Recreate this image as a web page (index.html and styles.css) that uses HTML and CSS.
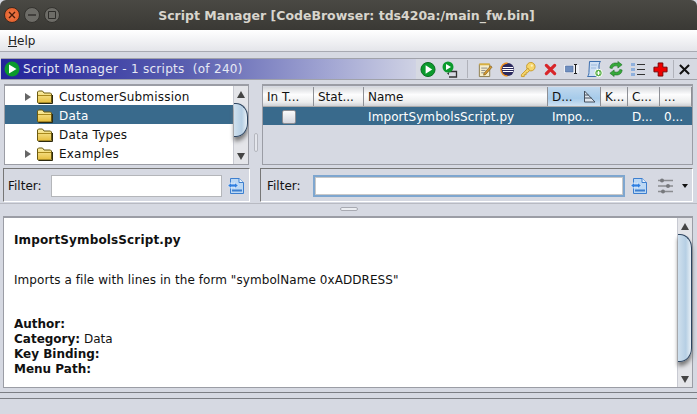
FILE: index.html

```html
<!DOCTYPE html>
<html lang="en">
<head>
  <meta charset="UTF-8" />
  <title>Script Manager</title>
  <link rel="stylesheet" href="styles.css">
</head>
<body>
  <svg class="defs" width="0" height="0">
    <defs>
      <linearGradient id="folderFill" x1="0" y1="0" x2="0" y2="1">
        <stop offset="0" stop-color="#fbf0a8"/>
        <stop offset="1" stop-color="#e6bc3a"/>
      </linearGradient>
    </defs>
    <symbol id="folder" viewBox="0 0 16 14">
      <path d="M.5 12.5V2L1.5 1H5.5L7 3H13.5L14.5 4V12.5L13.5 13H1.5Z" fill="url(#folderFill)" stroke="#6b5a10"/>
      <path d="M1 5.5H14" stroke="#a8881c"/>
      <path d="M1.5 13.5H15.5V5" fill="none" stroke="#2d2a10"/>
    </symbol>
    <symbol id="apply" viewBox="0 0 18 18">
      <path d="M3.5 1.5H12L16.5 5.5V16.5H3.5Z" fill="#bcd8f4" stroke="#3d7fcf"/>
      <path d="M12 1.5V5.5H16.5" fill="#e8f2fc" stroke="#3d7fcf"/>
      <path d="M5 13.5H15" stroke="#3d7fcf" stroke-width="2"/>
      <path d="M1 8.5L4 5.5V7H8V5.5L11 8.5L8 11.5V10H4V11.5Z" fill="#2f7fe0" stroke="#e8f2fc" stroke-width=".7"/>
    </symbol>
  </svg>

  <div class="window">
    <header class="titlebar">
      <div class="wm-buttons">
        <span class="wm-btn wm-close">
          <svg width="8" height="8" viewBox="0 0 8 8"><path d="M1 1L7 7M7 1L1 7" stroke="#4a1a08" stroke-width="1.4"/></svg>
        </span>
        <span class="wm-btn">
          <svg width="8" height="8" viewBox="0 0 8 8"><path d="M0 4H8" stroke="#2e2d2a" stroke-width="1.4"/></svg>
        </span>
        <span class="wm-btn">
          <svg width="8" height="8" viewBox="0 0 8 8"><path d="M.5.5H7.5V7.5H.5Z" fill="none" stroke="#2e2d2a"/></svg>
        </span>
      </div>
      <div class="window-title">Script Manager [CodeBrowser: tds420a:/main_fw.bin]</div>
    </header>

    <nav class="menubar"><span><u>H</u>elp</span></nav>

    <div class="provider-head">
      <div class="provider-title">
        <svg width="16" height="16" viewBox="0 0 16 16"><circle cx="8" cy="8" r="7.5" fill="#0b9a2c"/><path d="M5 3.5L12.5 8L5 12.5Z" fill="#fff"/></svg>
        <span>Script Manager - 1 scripts&nbsp; (of 240)</span>
      </div>
      <div class="toolbar">
        <svg class="tool" width="16" height="17" viewBox="0 0 17 17"><circle cx="8.5" cy="8.5" r="7.5" fill="#0b9a2c" stroke="#066b1d"/><path d="M6 4L13 8.5L6 13Z" fill="#fff"/></svg>
        <svg class="tool gap6" width="16" height="17" viewBox="0 0 16 17"><path d="M7 10.5H14.5V16H7" fill="none" stroke="#333" stroke-width="1.3"/><path d="M7 14L5 12.5L7 11" fill="#333"/><circle cx="6" cy="6" r="5.5" fill="#0b9a2c"/><path d="M4 3L9 6L4 9Z" fill="#fff"/></svg>
        <span class="tool-sep gap9"></span>
        <svg class="tool gap9" width="16" height="17" viewBox="0 0 17 17"><path d="M2.5 3H13.5V16H2.5Z" fill="#f6eecb" stroke="#8a7a4a"/><path d="M2.5 2H13.5V4H2.5Z" fill="#d8b040"/><path d="M4.5 7H11M4.5 9.5H9M4.5 12H8" stroke="#888"/><path d="M7.5 12.5L14.5 4.5L16 6L9 14L7 14.5Z" fill="#d89a30" stroke="#6b4c12" stroke-width=".6"/></svg>
        <svg class="tool gap7" width="15" height="15" viewBox="0 0 16 16"><circle cx="8" cy="8" r="7" fill="#2c2a5e"/><path d="M1 8A7 7 0 0 1 8 1" fill="none" stroke="#f09020" stroke-width="1.5"/><path d="M1 8A7 7 0 0 0 8 15" fill="none" stroke="#f09020" stroke-width="1.5"/><path d="M3 5.8H14M2.5 8H14.5M3 10.2H14" stroke="#fff" stroke-width="1.1"/></svg>
        <svg class="tool gap5" width="16" height="17" viewBox="0 0 17 17"><circle cx="11.5" cy="5.5" r="4.5" fill="#f6d66c" stroke="#c89a2a"/><circle cx="12.5" cy="4.5" r="1.2" fill="#fff3c0"/><path d="M8.5 7L1.5 14V16H4.5V14H6.5V12H8L10 9.5Z" fill="#f6d66c" stroke="#c89a2a"/></svg>
        <svg class="tool gap8" width="13" height="13" viewBox="0 0 14 14"><path d="M2.5 2.5L11.5 11.5M11.5 2.5L2.5 11.5" stroke="#d8262a" stroke-width="3.4" stroke-linecap="round"/></svg>
        <svg class="tool gap7" width="16" height="12" viewBox="0 0 16 12"><path d="M0 2H15V10H0Z" fill="#eef0f5"/><path d="M1.5 3H9V9H1.5Z" fill="#6f8fc0" stroke="#4a6a9c" stroke-width=".6"/><path d="M10 1.5H13M11.5 1.5V10.5M10 10.5H13" stroke="#222" fill="none"/></svg>
        <svg class="tool gap6" width="17" height="18" viewBox="0 0 17 18"><path d="M3.5 1.5H14.5C13 3 13 5 13 8V13L11 16.5H1.5C3 15 3 13 3 11Z" fill="#cfe0f4" stroke="#3d6fae"/><path d="M5 5H11M5 8H10" stroke="#9ab8dc"/><circle cx="12.5" cy="13" r="3.8" fill="#5bb04a" stroke="#fff"/><path d="M10.5 13H14.5M12.5 11V15" stroke="#fff" stroke-width="1.2"/></svg>
        <svg class="tool gap5" width="16" height="18" viewBox="0 0 17 18"><path d="M2 8C2 4 6 1.5 10.5 3V1L15 4.5L10.5 8V6C7.5 5 5 6 4.5 8.5Z" fill="#35a83a" stroke="#1c6b22" stroke-width=".6"/><path d="M15 10C15 14 11 16.5 6.5 15V17L2 13.5L6.5 10V12C9.5 13 12 12 12.5 9.5Z" fill="#35a83a" stroke="#1c6b22" stroke-width=".6"/></svg>
        <svg class="tool gap7" width="14" height="13" viewBox="0 0 14 13"><path d="M0 0H4V3H0ZM0 5H4V8H0ZM0 10H4V13H0Z" fill="#8fb0dc"/><path d="M6 1.5H14M6 6.5H14M6 11.5H14" stroke="#333"/></svg>
        <svg class="tool gap8" width="15" height="15" viewBox="0 0 16 16"><path d="M5.5 1H10.5V5.5H15V10.5H10.5V15H5.5V10.5H1V5.5H5.5Z" fill="#ee0000" stroke="#700"/></svg>
        <span class="tool-sep gap5"></span>
        <svg class="tool gap5" width="11" height="11" viewBox="0 0 12 12"><path d="M1 1L11 11M11 1L1 11" stroke="#111" stroke-width="2.2"/></svg>
      </div>
    </div>

    <div class="split-top">
      <section class="left-col">
        <div class="tree-box">
          <ul class="tree">
            <li class="tree-row"><span class="caret"></span><svg class="folder"><use href="#folder"/></svg>CustomerSubmission</li>
            <li class="tree-row selected"><span class="caret-none"></span><svg class="folder"><use href="#folder"/></svg>Data</li>
            <li class="tree-row"><span class="caret-none"></span><svg class="folder"><use href="#folder"/></svg>Data Types</li>
            <li class="tree-row"><span class="caret"></span><svg class="folder"><use href="#folder"/></svg>Examples</li>
            <li class="tree-row"><span class="caret-none"></span><svg class="folder"><use href="#folder"/></svg></li>
          </ul>
          <div class="scrollbar tree-scroll">
            <span class="arrow-up"></span>
            <span class="thumb"></span>
            <span class="arrow-down"></span>
          </div>
        </div>
        <div class="filter-box filter-left">
          <label>Filter:</label>
          <input class="filter-input" type="text">
          <svg class="apply-icon"><use href="#apply"/></svg>
        </div>
      </section>

      <div class="v-divider"><span class="v-grip"></span></div>

      <section class="right-col">
        <div class="table-box">
          <div class="thead">
            <span class="th col-a">In T...</span>
            <span class="th col-b">Stat...</span>
            <span class="th col-c">Name</span>
            <span class="th col-d sorted">D...
              <svg class="sort-icon" width="13" height="13" viewBox="0 0 13 13"><path d="M1.5 1V12H12L1.5 1Z" fill="#dfe6ee" stroke="#44505e"/><path d="M1.5 5H5.5M1.5 8H8.5" stroke="#44505e"/></svg>
            </span>
            <span class="th col-e">K...</span>
            <span class="th col-f">C...</span>
            <span class="th col-g">...</span>
          </div>
          <div class="tr">
            <span class="td col-a"><span class="checkbox"></span></span>
            <span class="td col-b"></span>
            <span class="td col-c">ImportSymbolsScript.py</span>
            <span class="td col-d">Impo...</span>
            <span class="td col-e"></span>
            <span class="td col-f">D...</span>
            <span class="td col-g">0...</span>
          </div>
        </div>
        <div class="filter-box filter-right">
          <label>Filter:</label>
          <input class="filter-input focused" type="text">
          <svg class="apply-icon"><use href="#apply"/></svg>
          <svg class="sliders" width="15" height="16" viewBox="0 0 15 16"><path d="M0 2.5H15M0 8H15M0 13.5H15" stroke="#8a8c90" stroke-width="1.6"/><circle cx="4" cy="2.5" r="2" fill="#77797d"/><circle cx="10" cy="8" r="2" fill="#77797d"/><circle cx="5" cy="13.5" r="2" fill="#77797d"/></svg>
          <span class="drop-arrow"></span>
        </div>
      </section>
    </div>

    <div class="h-divider"><span class="h-grip"></span></div>

    <section class="details">
      <div class="details-text">
        <p class="script-name">ImportSymbolsScript.py</p>
        <p class="script-desc">Imports a file with lines in the form "symbolName 0xADDRESS"</p>
        <p class="meta"><b>Author:</b><br><b>Category:</b> Data<br><b>Key Binding:</b><br><b>Menu Path:</b></p>
      </div>
      <div class="scrollbar details-scroll">
        <span class="arrow-up"></span>
        <span class="thumb"></span>
        <span class="arrow-down"></span>
      </div>
    </section>

    <footer class="statusbar"></footer>
  </div>
</body>
</html>
```

FILE: styles.css

```css
* { box-sizing: border-box; }
html, body { margin: 0; height: 100%; overflow: hidden; }
body { font-family: "DejaVu Sans", sans-serif; font-size: 12px; color: #111; background: #d6d9e2; }
.defs { position: absolute; }
.window { width: 697px; height: 414px; display: flex; flex-direction: column; }

.titlebar { height: 30px; flex: none; display: flex; align-items: center; background: linear-gradient(#4a4944, #3a3935); border-radius: 6px 6px 0 0; }
.wm-buttons { display: flex; gap: 4px; padding-left: 4px; }
.wm-btn { width: 16px; height: 16px; border-radius: 50%; background: #6d6c67; border: 1px solid #33322e; display: flex; align-items: center; justify-content: center; }
.wm-close { background: radial-gradient(#f08050, #e0551f); border-color: #3a2a20; }
.window-title { flex: 1; text-align: center; color: #d8d5cd; font-size: 12.5px; font-weight: bold; padding-right: 64px; }

.menubar { height: 22px; flex: none; padding: 4px 0 0 8px; background: linear-gradient(#fff, #e4e5ea); border-bottom: 1px solid #a8aab2; color: #222; }
.provider-head { margin: 6px 0 0 1px; height: 22px; flex: none; display: flex; border-top: 1px solid #a0a2aa; border-bottom: 1px solid #a0a2aa; }
.provider-title { width: 415px; flex: none; display: flex; align-items: center; gap: 3px; padding-left: 3px; color: #e6e8f4; letter-spacing: .28px; background: linear-gradient(90deg, #23239a, #5a5fb0 45%, #a4a8d4 80%, #cfd2e4); }
.toolbar { flex: 1; display: flex; align-items: center; padding-left: 4px; }
.tool { flex: none; }
.tool-sep { flex: none; width: 1px; height: 18px; background: #b0b2ba; }
.gap5 { margin-left: 5px; }
.gap6 { margin-left: 6px; }
.gap7 { margin-left: 7px; }
.gap8 { margin-left: 8px; }
.gap9 { margin-left: 9px; }

.split-top { display: flex; height: 119px; flex: none; margin-top: 4px; }
.left-col { width: 251px; flex: none; padding-left: 2px; display: flex; flex-direction: column; }
.right-col { flex: 1; min-width: 0; padding-right: 4px; display: flex; flex-direction: column; }
.v-divider { width: 10px; flex: none; display: flex; align-items: center; justify-content: center; }
.v-grip { width: 4px; height: 19px; border: 1px solid #b4b6be; border-radius: 2px; background: #e4e6ec; margin-top: -3px; }

.tree-box { height: 81px; flex: none; margin: 0 2px; border: 1px solid #9b9da5; border-top-width: 2px; background: #fff; display: flex; overflow: hidden; }
.tree { list-style: none; margin: 0; padding: 0; flex: 1; letter-spacing: .2px; }
.tree-row { height: 19px; display: flex; align-items: center; padding: 2px 0 0 20px; }
.tree-row.selected { background: #396a8c; color: #fff; }
.caret { width: 0; height: 0; margin-right: 6px; border-left: 6px solid #666; border-top: 4px solid transparent; border-bottom: 4px solid transparent; }
.caret-none { width: 12px; flex: none; }
.folder { width: 16px; height: 14px; margin-right: 6px; flex: none; }

.scrollbar { width: 15px; flex: none; display: flex; flex-direction: column; align-items: center; background: #e4e5e9; border-left: 1px solid #c8cad2; }
.arrow-up, .arrow-down { flex: none; width: 0; height: 0; border-left: 4px solid transparent; border-right: 4px solid transparent; }
.arrow-up { border-bottom: 7px solid #444; margin-top: 5px; }
.arrow-down { border-top: 7px solid #444; margin-top: auto; margin-bottom: 4px; }
.thumb { flex: none; width: 100%; border: 1px solid #2e4560; border-left: none; border-radius: 0 12px 12px 0 / 0 14px 14px 0; background: linear-gradient(90deg, #cfe0ee, #b6cfe4 60%, #e8f0f6); box-shadow: 0 4px 4px #777; }
.tree-scroll .thumb { height: 34px; margin-top: 5px; }
.details-scroll .thumb { height: 128px; margin-top: 4px; }

.filter-box { height: 34px; flex: none; margin-top: 3px; padding-top: 2px; display: flex; align-items: center; border: 1px solid #fff; border-left-color: #777; border-top-color: #777; }
.filter-box label { display: block; flex: none; }
.filter-left { margin-left: 1px; margin-right: 1px; }
.filter-left label { width: 43px; margin-left: 4px; }
.filter-right { margin-left: -1px; }
.filter-right label { width: 46px; margin-left: 6px; }
.filter-input { height: 22px; flex: none; border: 1px solid #b4b6ba; background: #fff; padding: 0; outline: none; }
.filter-left .filter-input { width: 171px; }
.filter-right .filter-input { width: 312px; }
.filter-input.focused { border: 2px solid #7ea6cf; box-shadow: inset 0 0 0 1px #c8c8c8; }
.apply-icon { width: 18px; height: 18px; margin-left: 5px; flex: none; }
.sliders { margin-left: 10px; flex: none; }
.drop-arrow { width: 0; height: 0; margin-left: 9px; border-left: 3px solid transparent; border-right: 3px solid transparent; border-top: 4px solid #111; }

.table-box { height: 81px; flex: none; margin-left: 1px; padding-top: 1px; border: 1px solid #9b9da5; border-top-width: 2px; background: #d6d9e2; overflow: hidden; }
.thead, .tr { display: flex; }
.thead { height: 20px; background: linear-gradient(#d6d8dc, #fdfdfe 40%, #eceded 80%, #cfd1d6); border-bottom: 1px solid #aaa; }
.tr { height: 18px; padding-top: 1px; background: #396a8c; color: #fff; }
.th, .td { flex: none; padding-left: 4px; display: flex; align-items: center; white-space: nowrap; overflow: hidden; }
.th { border-right: 1px solid #8e9096; }
.col-a { width: 51px; }
.col-b { width: 50px; }
.col-c { width: 184px; }
.col-d { width: 53px; }
.col-e { width: 27px; }
.col-f { width: 32px; }
.col-g { width: 32px; }
.td.col-c { letter-spacing: .1px; }
.th.sorted { background: linear-gradient(#c0d8ee, #a6cbea 60%, #cfe2f2); justify-content: space-between; padding-right: 4px; }
.td.col-a { justify-content: center; padding: 0; }
.checkbox { width: 14px; height: 14px; border: 1px solid #8a8c92; border-radius: 2px; background: linear-gradient(#fafafa, #d4d6de); }

.h-divider { height: 13px; flex: none; display: flex; justify-content: center; align-items: center; border-top: 1px solid #b8bac2; }
.h-grip { width: 18px; height: 4px; border: 1px solid #a8aab2; border-radius: 2px; background: #eceef2; margin-top: -3px; }

.details { height: 172px; flex: none; margin: 0 4px 0 3px; display: flex; background: #fff; border: 1px solid #9b9da5; border-top-width: 2px; }
.details-text { flex: 1; padding: 15px 0 0 10px; line-height: 15px; }
.details-text p { margin: 0; }
.script-name { font-weight: bold; letter-spacing: .14px; }
.script-desc { margin-top: 25px !important; letter-spacing: .07px; }
.meta { margin-top: 29px !important; }

.statusbar { flex: none; height: 7px; margin-top: 4px; border-top: 1px solid #7c7e84; border-bottom: 1px solid #7c7e84; }
```
